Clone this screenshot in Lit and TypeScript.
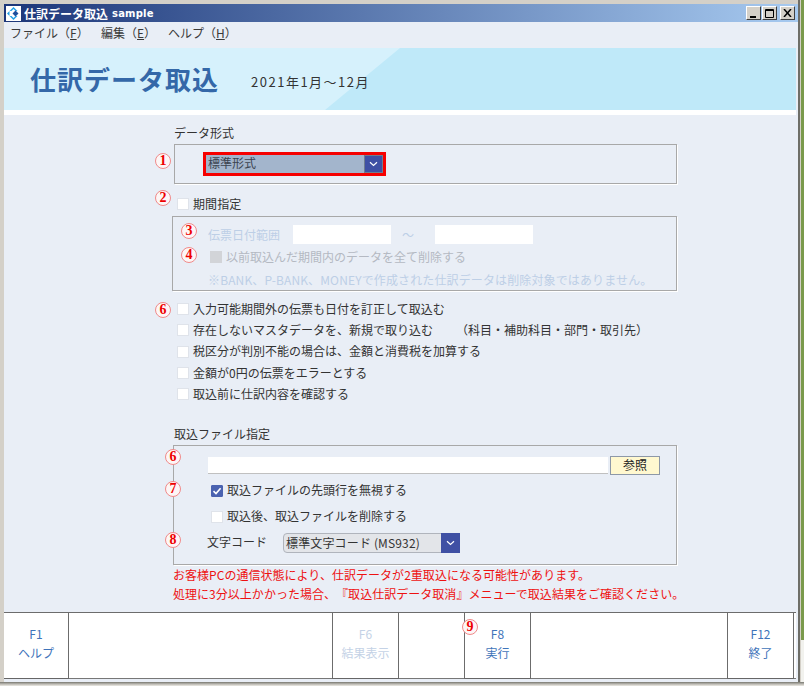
import { LitElement, html, css, svg } from "lit";
import { customElement } from "lit/decorators.js";

const MARKS: [string, number, number][] = [
  ["1", 163, 161],
  ["2", 163, 198],
  ["3", 189, 231],
  ["4", 189, 255],
  ["6", 163, 310],
  ["6", 173, 457],
  ["7", 173, 489],
  ["8", 173, 540],
  ["9", 470, 627],
];

@customElement("app-root")
export class AppRoot extends LitElement {
  static styles = css`
    :host {
      display: block;
      width: 804px;
      height: 686px;
      position: relative;
      overflow: hidden;
      background: #d4d0c8;
      font-family: "Noto Sans CJK JP", "Noto Sans", sans-serif;
      font-size: 12px;
      color: #333;
      text-spacing-trim: space-all;
    }
    .win {
      position: absolute;
      left: 4px;
      top: 4px;
      width: 794px;
      height: 678px;
      display: flex;
      flex-direction: column;
      background: #e9eef6;
    }
    .rail {
      position: absolute;
      right: 0;
      top: 0;
      bottom: 0;
      width: 6px;
      display: flex;
    }
    .rail i { display: block; }
    .rail .a { width: 2px; background: #6e6e68; }
    .rail .b { width: 1px; background: #d4d0c8; }
    .rail .c { width: 3px; background: linear-gradient(#7a9a4c 0 640px, #f2f2ee 640px); }
    .base {
      position: absolute;
      left: 0;
      right: 0;
      bottom: 0;
      height: 4px;
      background: linear-gradient(#77776f, #b9b7b0 50%, #eceae4);
    }
    .tbar {
      height: 18px;
      flex: none;
      display: flex;
      align-items: center;
      background: linear-gradient(90deg, #1c3679, #a7caf0);
      color: #fff;
      font-weight: 700;
      font-size: 12px;
      padding-left: 2px;
    }
    .tbar svg.logo { flex: none; margin-right: 3px; }
    .tbar .s { font-family: "DejaVu Sans", sans-serif; font-size: 10px; margin-left: 4px; letter-spacing: .2px; }
    .wbtns { margin-left: auto; display: flex; margin-right: 3px; }
    .wb {
      width: 15px;
      height: 14px;
      box-sizing: border-box;
      background: #d4d0c8;
      border: 1px solid;
      border-color: #fff #404040 #404040 #fff;
      display: flex;
      align-items: center;
      justify-content: center;
    }
    .wb + .wb { margin-left: 1px; }
    .wb.close { margin-left: 3px; }
    .menu {
      height: 26px;
      flex: none;
      display: flex;
      align-items: center;
      padding: 0 0 5px 6px;
      box-sizing: border-box;
      font-size: 12px;
      color: #3a3a3a;
    }
    .menu span { white-space: pre; }
    .menu span:nth-child(1) { width: 91px; }
    .menu span:nth-child(2) { width: 67px; }
    .head {
      height: 62px;
      flex: none;
      margin-right: 2px;
      position: relative;
      overflow: hidden;
      background: #d6f1fc;
      display: flex;
      align-items: center;
      padding-left: 26px;
      box-sizing: border-box;
    }
    .head svg { position: absolute; inset: 0; }
    .head h1 {
      position: relative;
      margin: 0;
      font-size: 26px;
      font-weight: 700;
      letter-spacing: 1px;
      color: #3468a8;
      line-height: 62px;
    }
    .head .d {
      position: relative;
      margin-left: 32px;
      font-size: 13px;
      letter-spacing: 1.5px;
      color: #333;
      padding-top: 5px;
    }
    .gap { height: 5px; flex: none; background: #fff; margin-right: 2px; }
    .main {
      flex: 1;
      padding: 9px 0 0 168px;
      box-sizing: border-box;
      min-height: 0;
    }
    .lbl { height: 20px; line-height: 18px; margin-left: 2px; color: #333; }
    .box {
      box-sizing: border-box;
      border: 1px solid #a8a8a8;
      box-shadow: 1px 1px 0 #fff;
      width: 503px;
    }
    .b1 { height: 40px; margin-left: 2px; padding: 7px 0 0 28px; }
    .red {
      width: 183px;
      height: 24px;
      box-sizing: border-box;
      border: 3px solid #f60000;
      background: #a3b5cc;
      display: flex;
      align-items: stretch;
      justify-content: space-between;
      color: #3c4450;
      line-height: 15px;
      padding-left: 2px;
    }
    .arr {
      width: 19px;
      flex: none;
      box-sizing: border-box;
      background: #3f50a4;
      display: flex;
      align-items: center;
      justify-content: center;
    }
    .red .arr { border: 1px solid #6f7d90; }
    .chk {
      display: flex;
      align-items: center;
      gap: 4px;
      white-space: pre;
    }
    .chk span:not(.cb) { position: relative; top: -1px; }
    .cb {
      width: 12px;
      height: 12px;
      flex: none;
      box-sizing: border-box;
      background: #fff;
      border: 1px solid #dfe3ea;
      display: flex;
      align-items: center;
      justify-content: center;
    }
    .cb.dis { background: #d2d4d8; border-color: #d2d4d8; }
    .cb.on { background: #4a62b0; border-color: #4a62b0; border-radius: 1px; }
    .period { height: 18px; margin: 11px 0 3px 5px; letter-spacing: .1px; }
    .b2 { height: 75px; width: 505px; padding: 8px 0 0 35px; color: #bdcfe6; }
    .range { display: flex; align-items: center; height: 19px; }
    .range .t { width: 85px; }
    .inp { height: 19px; width: 98px; background: #fff; box-sizing: border-box; }
    .range .w { width: 44px; padding-left: 11px; box-sizing: border-box; }
    .del { height: 12px; margin: 7px 0 0 2px; color: #b4b9c2; }
    .note { margin-top: 8px; height: 18px; line-height: 18px; white-space: pre; letter-spacing: .13px; }
    .opts { margin: 7.5px 0 20px 5px; }
    .opts .chk { height: 21.3px; }
    .opts .extra { margin-left: 19px; }
    .b3 { height: 120px; width: 504px; margin-left: 1px; padding: 10px 0 0 34px; }
    .file { display: flex; align-items: center; height: 19px; }
    .file .inp { width: 400px; height: 17px; border-bottom: 1px solid #c0c0c0; }
    .ref {
      width: 50px;
      height: 19px;
      margin-left: 2px;
      box-sizing: border-box;
      background: #fff8d0;
      border: 1px solid #8d98a8;
      text-align: center;
      line-height: 16px;
      color: #222;
    }
    .b3 .chk { margin-left: 3px; height: 12px; }
    .b3 .c1 { margin-top: 10px; }
    .b3 .c2 { margin-top: 14px; }
    .code { display: flex; align-items: center; height: 20px; margin-top: 10px; margin-left: -1px; }
    .code .t { width: 76px; position: relative; top: -1px; }
    .sel {
      width: 177px;
      height: 20px;
      box-sizing: border-box;
      display: flex;
      justify-content: space-between;
      background: #e3e5e9;
      border: 1px solid #b0b4bc;
      border-radius: 4px 0 0 4px;
      line-height: 17px;
      padding-left: 2px;
      letter-spacing: .15px;
      color: #333;
    }
    .sel .arr { margin: -1px -1px -1px 0; }
    .warn {
      color: #ee1111;
      line-height: 19px;
      margin-left: 1px;
      white-space: pre;
      letter-spacing: .03px;
    }
    .foot {
      height: 67px;
      flex: none;
      margin: 0 2px 3px 0;
      background: #fff;
      box-sizing: border-box;
      border-top: 1px solid #6c6c6c;
      border-bottom: 1px solid #777;
      display: flex;
      position: relative;
    }
    .key {
      box-sizing: border-box;
      border-bottom: 1px solid #666;
      margin-bottom: -1px;
      width: 67px;
      border-right: 1px solid #6c6c6c;
      border-left: 1px solid #6c6c6c;
      text-align: center;
      color: #3f74ba;
      padding-top: 11px;
      line-height: 19px;
    }
    .key.first { width: 65px; border-left: 0; }
    .key.off { color: #c4d2e6; }
    .sp1 { width: 263px; }
    .sp2 { width: 65px; }
    .sp3 { width: 196px; }
    .mk {
      position: absolute;
      width: 16px;
      height: 16px;
      box-sizing: border-box;
      transform: translate(-50%, -50%);
      border: 1px solid #f08a8a;
      border-radius: 50%;
      background: #fdf6f6;
      color: #ee0000;
      font: 700 14px/14px "Liberation Serif", serif;
      text-align: center;
    }
  `;

  private check() {
    return svg`<svg width="10" height="10" viewBox="0 0 10 10"><path d="M1.5 5.2 4 7.6 8.6 2.2" fill="none" stroke="#fff" stroke-width="1.6"/></svg>`;
  }
  private chev() {
    return html`<div class="arr"><svg width="9" height="6" viewBox="0 0 9 6"><path d="M1 1.2 4.5 4.4 8 1.2" fill="none" stroke="#fff" stroke-width="1.2"/></svg></div>`;
  }

  render() {
    return html`
      <div class="rail"><i class="a"></i><i class="b"></i><i class="c"></i></div>
      <div class="base"></div>
      <div class="win">
        <div class="tbar">
          <svg class="logo" width="15" height="15" viewBox="0 0 15 15">
            <rect width="15" height="15" fill="#fff" />
            <path d="M7.5 1 11.5 5H9.500L7.500 3 5.500 5H3.500ZM7.500 14 3.500 10H5.500L7.500 12 9.500 10H11.500ZM1 7.500 3.500 5V10Z" fill="#22a0e6" />
            <path d="M9.500 4.500 12.500 7.500 9.500 10.500 6.500 7.500Z" fill="#1d4f9c" />
          </svg>
          <span>仕訳データ取込</span><span class="s">sample</span>
          <div class="wbtns">
            <div class="wb"><svg width="9" height="9" viewBox="0 0 9 9"><rect x="1" y="7" width="6" height="2" fill="#000" /></svg></div>
            <div class="wb"><svg width="10" height="9" viewBox="0 0 10 9"><path d="M.5.5h8v8h-8zM.5 1.500h8" fill="none" stroke="#000" /></svg></div>
            <div class="wb close"><svg width="9" height="8" viewBox="0 0 9 8"><path d="M1 0 8 8M8 0 1 8" stroke="#000" stroke-width="1.500" /></svg></div>
          </div>
        </div>
        <div class="menu">
          <span>ファイル（<u>F</u>）</span><span>編集（<u>E</u>）</span><span>ヘルプ（<u>H</u>）</span>
        </div>
        <div class="head">
          <svg width="792" height="62" viewBox="0 0 792 62"><path d="M321 62 396 0H792V62Z" fill="#bfe9f9" /></svg>
          <h1>仕訳データ取込</h1>
          <span class="d">2021年1月～12月</span>
        </div>
        <div class="gap"></div>
        <div class="main">
          <div class="lbl">データ形式</div>
          <div class="box b1">
            <div class="red"><span>標準形式</span>${this.chev()}</div>
          </div>
          <div class="chk period"><span class="cb"></span><span>期間指定</span></div>
          <div class="box b2">
            <div class="range">
              <span class="t">伝票日付範囲</span><span class="inp"></span><span class="w">～</span><span class="inp"></span>
            </div>
            <div class="chk del"><span class="cb dis"></span><span>以前取込んだ期間内のデータを全て削除する</span></div>
            <div class="note">※BANK、P-BANK、MONEYで作成された仕訳データは削除対象ではありません。</div>
          </div>
          <div class="opts">
            <div class="chk"><span class="cb"></span><span>入力可能期間外の伝票も日付を訂正して取込む</span></div>
            <div class="chk"><span class="cb"></span><span>存在しないマスタデータを、新規で取り込む</span><span class="extra">（科目・補助科目・部門・取引先）</span></div>
            <div class="chk"><span class="cb"></span><span>税区分が判別不能の場合は、金額と消費税を加算する</span></div>
            <div class="chk"><span class="cb"></span><span>金額が0円の伝票をエラーとする</span></div>
            <div class="chk"><span class="cb"></span><span>取込前に仕訳内容を確認する</span></div>
          </div>
          <div class="lbl">取込ファイル指定</div>
          <div class="box b3">
            <div class="file"><span class="inp"></span><span class="ref">参照</span></div>
            <div class="chk c1"><span class="cb on">${this.check()}</span><span>取込ファイルの先頭行を無視する</span></div>
            <div class="chk c2"><span class="cb"></span><span>取込後、取込ファイルを削除する</span></div>
            <div class="code">
              <span class="t">文字コード</span>
              <div class="sel"><span>標準文字コード (MS932)</span>${this.chev()}</div>
            </div>
          </div>
          <div class="warn">お客様PCの通信状態により、仕訳データが2重取込になる可能性があります。</div>
          <div class="warn">処理に3分以上かかった場合、『取込仕訳データ取消』メニューで取込結果をご確認ください。</div>
        </div>
        <div class="foot">
          <div class="key first">F1<br />ヘルプ</div>
          <div class="sp1"></div>
          <div class="key off">F6<br />結果表示</div>
          <div class="sp2"></div>
          <div class="key">F8<br />実行</div>
          <div class="sp3"></div>
          <div class="key">F12<br />終了</div>
        </div>
      </div>
      ${MARKS.map(
        ([n, x, y]) => html`<span class="mk" style="left:${x}px;top:${y}px">${n}</span>`
      )}
    `;
  }
}
